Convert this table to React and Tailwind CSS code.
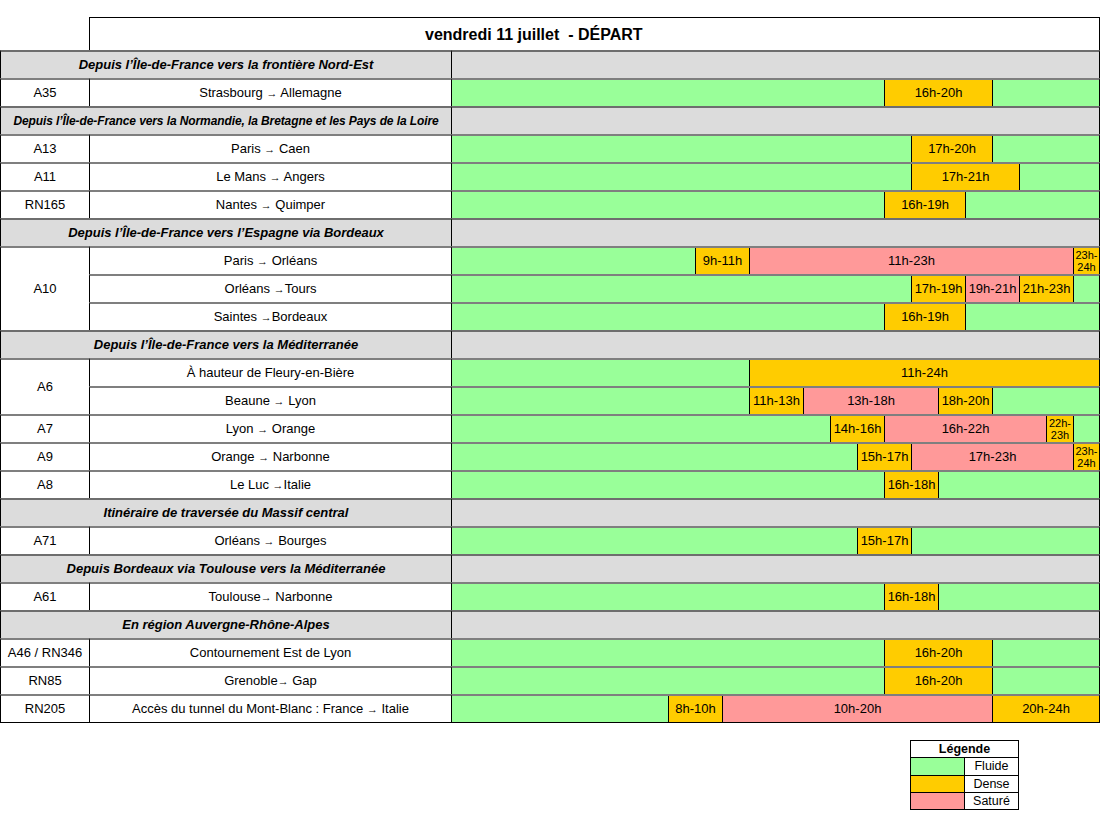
import { Fragment } from 'react';
import clsx from 'clsx';

const G = 'bg-[#99ff99]';
const O = 'bg-[#ffcc00]';
const R = 'bg-[#ff9999]';

const sections = [
    {
        title: 'Depuis l’Île-de-France vers la frontière Nord-Est',
        rows: [
            { road: 'A35', route: ['Strasbourg ', ' Allemagne'], segs: [[0, 16, G], [16, 20, O], [20, 24, G]] },
        ],
    },
    {
        title: 'Depuis l’Île-de-France vers la Normandie, la Bretagne et les Pays de la Loire',
        small: true,
        rows: [
            { road: 'A13', route: ['Paris ', ' Caen'], segs: [[0, 17, G], [17, 20, O], [20, 24, G]] },
            { road: 'A11', route: ['Le Mans ', ' Angers'], segs: [[0, 17, G], [17, 21, O], [21, 24, G]] },
            { road: 'RN165', route: ['Nantes ', ' Quimper'], segs: [[0, 16, G], [16, 19, O], [19, 24, G]] },
        ],
    },
    {
        title: 'Depuis l’Île-de-France vers l’Espagne via Bordeaux',
        rows: [
            { road: 'A10', span: 3, route: ['Paris ', ' Orléans'], segs: [[0, 9, G], [9, 11, O], [11, 23, R], [23, 24, O]] },
            { route: ['Orléans ', 'Tours'], segs: [[0, 17, G], [17, 19, O], [19, 21, R], [21, 23, O], [23, 24, G]] },
            { route: ['Saintes ', 'Bordeaux'], segs: [[0, 16, G], [16, 19, O], [19, 24, G]] },
        ],
    },
    {
        title: 'Depuis l’Île-de-France vers la Méditerranée',
        rows: [
            { road: 'A6', span: 2, route: ['À hauteur de Fleury-en-Bière'], segs: [[0, 11, G], [11, 24, O]] },
            { route: ['Beaune ', ' Lyon'], segs: [[0, 11, G], [11, 13, O], [13, 18, R], [18, 20, O], [20, 24, G]] },
            { road: 'A7', route: ['Lyon ', ' Orange'], segs: [[0, 14, G], [14, 16, O], [16, 22, R], [22, 23, O], [23, 24, G]] },
            { road: 'A9', route: ['Orange ', ' Narbonne'], segs: [[0, 15, G], [15, 17, O], [17, 23, R], [23, 24, O]] },
            { road: 'A8', route: ['Le Luc ', 'Italie'], segs: [[0, 16, G], [16, 18, O], [18, 24, G]] },
        ],
    },
    {
        title: 'Itinéraire de traversée du Massif central',
        rows: [
            { road: 'A71', route: ['Orléans ', ' Bourges'], segs: [[0, 15, G], [15, 17, O], [17, 24, G]] },
        ],
    },
    {
        title: 'Depuis Bordeaux via Toulouse vers la Méditerranée',
        rows: [
            { road: 'A61', route: ['Toulouse', ' Narbonne'], segs: [[0, 16, G], [16, 18, O], [18, 24, G]] },
        ],
    },
    {
        title: 'En région Auvergne-Rhône-Alpes',
        rows: [
            { road: 'A46 / RN346', route: ['Contournement Est de Lyon'], segs: [[0, 16, G], [16, 20, O], [20, 24, G]] },
            { road: 'RN85', route: ['Grenoble', ' Gap'], segs: [[0, 16, G], [16, 20, O], [20, 24, G]] },
            { road: 'RN205', route: ['Accès du tunnel du Mont-Blanc : France ', ' Italie'], segs: [[0, 8, G], [8, 10, O], [10, 20, R], [20, 24, O]] },
        ],
    },
];

const spans = { 1: '', 2: 'row-span-2', 3: 'row-span-3' };
const line = 'border-t-2 border-t-black/50';

const Arrow = () => <span className="text-[11px] align-[-2px]">→</span>;

const Timeline = ({ segs }) => (
    <div className={clsx('col-start-3 flex border-r border-black', line)}>
        {segs.map(([s, e, c], i) => {
            const last = i === segs.length - 1;
            const w = (e - s) * 27;
            return (
                <div
                    key={i}
                    className={clsx('flex items-center justify-center text-center', c, i > 0 && 'border-l border-black', last && 'flex-1')}
                    style={last ? undefined : { width: w }}
                >
                    {c !== G && (e - s === 1 ? (
                        <span className="text-[11px] leading-[12px]">{s}h-<br />{e}h</span>
                    ) : (
                        <span>{s}h-{e}h</span>
                    ))}
                </div>
            );
        })}
    </div>
);

export default function App() {
    return (
        <div className="w-[1106px] h-[835px] bg-white text-black font-['Liberation_Sans',Arial,sans-serif] text-[13px]">
            <div className="pt-[17px] w-[1100px]">
                <div className="grid grid-cols-[89px_363px_648px] grid-rows-[33px] auto-rows-[28px] border-b border-black">
                    <div />
                    <div className="col-span-2 flex items-center border-t border-x border-black pl-[335px] pt-px text-[16px] font-bold">
                        vendredi 11 juillet&nbsp; - DÉPART
                    </div>
                    {sections.map((sec) => (
                        <Fragment key={sec.title}>
                            <div
                                className={clsx('col-span-2 col-start-1 flex items-center justify-center bg-[#dcdcdc] border-x border-black font-bold italic', line, sec.small && 'text-[12px] tracking-[-0.1px]')}
                            >
                                {sec.title}
                            </div>
                            <div className={clsx('col-start-3 bg-[#dcdcdc] border-r border-black', line)} />
                            {sec.rows.map((r, i) => (
                                <Fragment key={i}>
                                    {r.road && (
                                        <div className={clsx('col-start-1 flex items-center justify-center border-l border-black', line, spans[r.span || 1])}>
                                            {r.road}
                                        </div>
                                    )}
                                    <div className={clsx('col-start-2 flex items-center justify-center border-x border-black whitespace-pre', line)}>
                                        {r.route[0]}
                                        {r.route.length > 1 && <Arrow />}
                                        {r.route[1]}
                                    </div>
                                    <Timeline segs={r.segs} />
                                </Fragment>
                            ))}
                        </Fragment>
                    ))}
                </div>
            </div>

            {/* Légende */}
            <div className="ml-[910px] mt-[17px] w-[109px] border border-black text-[12.5px] leading-none">
                <div className="h-[17px] flex items-center justify-center font-bold border-b border-black">Légende</div>
                {[[G, 'Fluide'], [O, 'Dense'], [R, 'Saturé']].map(([c, t], i) => (
                    <div key={t} className={clsx('grid grid-cols-[54px_1fr] h-[17px]', i > 0 && 'border-t border-black')}>
                        <div className={clsx(c, 'border-r border-black')} />
                        <div className="flex items-center justify-center">{t}</div>
                    </div>
                ))}
            </div>
        </div>
    );
}
